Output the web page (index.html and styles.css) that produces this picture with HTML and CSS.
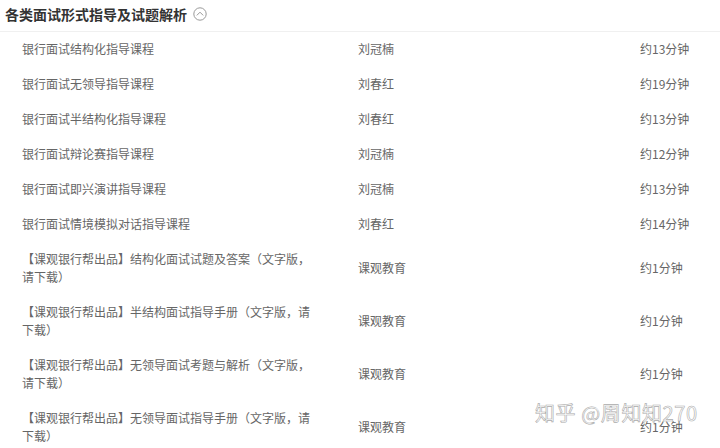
FILE: index.html
```html
<!DOCTYPE html>
<html lang="zh">
<head>
<meta charset="utf-8">
<link rel="stylesheet" href="styles.css">
</head>
<body>
<div class="page">
  <div class="header">
    <span class="title">各类面试形式指导及试题解析</span>
    <svg class="toggle" width="14" height="14" viewBox="0 0 14 14"><circle cx="7" cy="7" r="6.2" fill="none" stroke="#999" stroke-width="1"/><path d="M3.8 8.4 L7 5.2 L10.2 8.4" fill="none" stroke="#999" stroke-width="1"/></svg>
  </div>
  <div class="list">
    <div class="row"><div class="name">银行面试结构化指导课程</div><div class="author">刘冠楠</div><div class="time">约13分钟</div></div>
    <div class="row"><div class="name">银行面试无领导指导课程</div><div class="author">刘春红</div><div class="time">约19分钟</div></div>
    <div class="row"><div class="name">银行面试半结构化指导课程</div><div class="author">刘春红</div><div class="time">约13分钟</div></div>
    <div class="row"><div class="name">银行面试辩论赛指导课程</div><div class="author">刘冠楠</div><div class="time">约12分钟</div></div>
    <div class="row"><div class="name">银行面试即兴演讲指导课程</div><div class="author">刘冠楠</div><div class="time">约13分钟</div></div>
    <div class="row"><div class="name">银行面试情境模拟对话指导课程</div><div class="author">刘春红</div><div class="time">约14分钟</div></div>
    <div class="row"><div class="name">【课观银行帮出品】结构化面试试题及答案（文字版，请下载）</div><div class="author">课观教育</div><div class="time">约1分钟</div></div>
    <div class="row"><div class="name">【课观银行帮出品】半结构面试指导手册（文字版，请下载）</div><div class="author">课观教育</div><div class="time">约1分钟</div></div>
    <div class="row"><div class="name">【课观银行帮出品】无领导面试考题与解析（文字版，请下载）</div><div class="author">课观教育</div><div class="time">约1分钟</div></div>
    <div class="row"><div class="name">【课观银行帮出品】无领导面试指导手册（文字版，请下载）</div><div class="author">课观教育</div><div class="time">约1分钟</div></div>
  </div>
  <div class="watermark">知乎 @周知知270</div>
</div>
</body>
</html>
```
FILE: styles.css
```css
html, body {
  margin: 0;
  padding: 0;
  background: #fff;
}
body {
  font-family: "Noto Sans CJK SC", "Microsoft YaHei", sans-serif;
  overflow: hidden;
}
.page {
  position: relative;
  width: 720px;
  height: 448px;
  overflow: hidden;
}
.header {
  height: 32px;
  box-sizing: border-box;
  border-bottom: 1px solid #f0f0f0;
  display: flex;
  align-items: center;
  padding-left: 5px;
  padding-bottom: 4px;
}
.title {
  font-size: 14px;
  font-weight: bold;
  color: #333;
  line-height: 20px;
}
.toggle {
  margin-left: 6px;
  display: block;
}
.list {
  display: flex;
  flex-direction: column;
}
.row {
  display: grid;
  grid-template-columns: 336px 282px 1fr;
  align-items: center;
  padding: 8px 0 9px 22px;
  font-size: 12px;
  line-height: 18px;
  color: #666;
}
.name {
  width: 294px;
}
.watermark {
  position: absolute;
  left: 535px;
  top: 400px;
  font-size: 20px;
  line-height: 26px;
  color: rgba(255, 255, 255, 0.9);
  -webkit-text-stroke: 0.6px #aaa;
  letter-spacing: 0.6px;
  white-space: nowrap;
}
```
